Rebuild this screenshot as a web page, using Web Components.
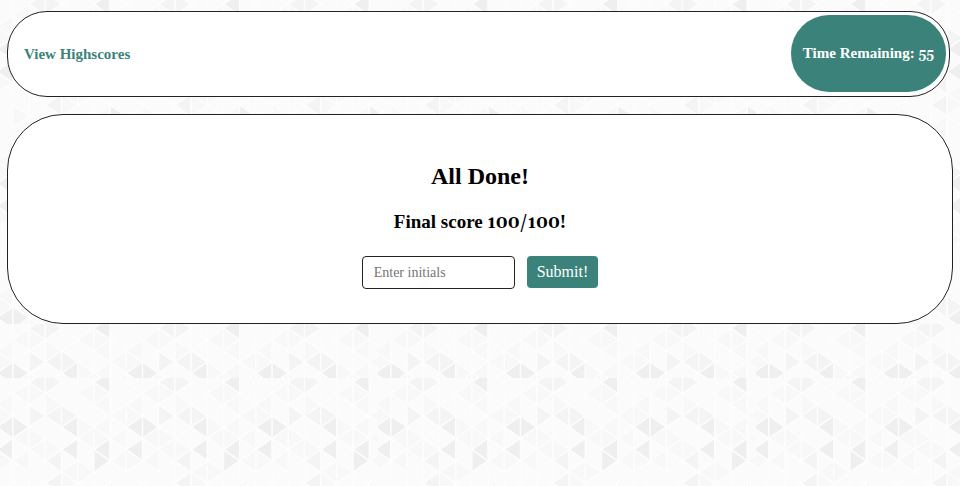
<!DOCTYPE html>
<html lang="en">
<head>
<meta charset="utf-8">
<title>Quiz</title>
<style>
  html { background: #fafafa; }
  body { margin: 0; font-family: "Liberation Serif", serif; color: #000; --accent: #3b837a; }
  .figures { font-family: Georgia, Gelasio, serif; font-size: 13px; line-height: 1; }
  h3 .figures { font-size: 17px; }
</style>
</head>
<body>
<quiz-page>
  <quiz-header>
    <a href="#highscores" slot="link">View Highscores</a>
    <quiz-timer>Time Remaining: <span class="figures">55</span></quiz-timer>
  </quiz-header>
  <quiz-card>
    <h2 slot="title">All Done!</h2>
    <h3 slot="score">Final score <span class="figures">100/100</span>!</h3>
    <initials-form></initials-form>
  </quiz-card>
</quiz-page>
<script>
const define = (name, html) => customElements.define(name, class extends HTMLElement {
  constructor() {
    super();
    this.attachShadow({ mode: "open" }).innerHTML = html;
  }
});

// Triangle mesh: each row is one 8-column group; digits are shades, 0 is the plain ground.
const rows = ["00220030", "01100110", "10010010", "10222001", "33003110", "01100111", "30113030", "11020031", "00001100", "00021000", "01000013", "00110000"];
const shades = ["#fbfbfb", "#f8f8f8", "#f4f4f4", "#efefef"];
const W = 16.2, H = 11.2, X0 = -3.3, Y0 = 4.4;

function meshGroup(top, bottom) {
  let shapes = "";
  const count = Math.ceil((bottom - top) / H) + 1;
  for (let k = -1; k < count; k++) {
    const row = k < 0 ? "00000000" : rows[k % 12];
    for (let c = 0; c < 24; c++) {
      const x = X0 + W * c, y = top + Y0 + H * k;
      const even = (c + k) % 2 === 0;
      const points = even ? `${x},${y} ${x + W},${y - H} ${x + W},${y + H}` : `${x + W},${y} ${x},${y - H} ${x},${y + H}`;
      shapes += `<polygon points="${points}" fill="${shades[row[c % 8]]}" stroke="#fdfdfd" stroke-width="1.4"/>`;
    }
  }
  return `<svg y="${top}" width="378" height="${bottom - top}" viewBox="0 ${top} 378 ${bottom - top}">${shapes}</svg>`;
}

define("mesh-backdrop", `
  <style>
    :host { position: fixed; inset: 0; z-index: -1; }
    svg { display: block; }
  </style>
  <svg width="100%" height="100%" aria-hidden="true">
    <defs><pattern id="mesh" width="378" height="378" patternUnits="userSpaceOnUse">${meshGroup(0, 324)}${meshGroup(324, 378)}</pattern></defs>
    <rect width="100%" height="100%" fill="url(#mesh)"/>
  </svg>`);

define("quiz-page", `
  <style>
    :host { display: flex; flex-direction: column; gap: 17px; padding: 11px 7px; }
  </style>
  <mesh-backdrop></mesh-backdrop>
  <slot></slot>`);

define("quiz-header", `
  <style>
    :host { display: block; margin-right: 3px; }
    header { display: flex; justify-content: space-between; align-items: center; padding: 3px 3px 4px 16px; background: #fff; border: 1px solid #222; border-radius: 40px; }
    ::slotted(a) { color: var(--accent); font-size: 15px; line-height: 20px; font-weight: bold; text-decoration: none; }
  </style>
  <header><slot name="link"></slot><slot></slot></header>`);

define("quiz-timer", `
  <style>
    :host { display: block; padding: 28px 12px 29px; border-radius: 38px; background: var(--accent); color: #fff; font-size: 15px; line-height: 20px; font-weight: bold; }
  </style>
  <slot></slot>`);

define("quiz-card", `
  <style>
    :host { display: block; }
    main { display: flex; flex-direction: column; align-items: center; padding: 46px 16px 34px; background: #fff; border: 1px solid #222; border-radius: 56px; }
    ::slotted(h2) { margin: 0; font-size: 24px; line-height: 30px; }
    ::slotted(h3) { margin: 19px 0 22px; font-size: 19px; line-height: 24px; }
  </style>
  <main><slot name="title"></slot><slot name="score"></slot><slot></slot></main>`);

define("initials-form", `
  <style>
    :host { display: block; }
    form { display: flex; align-items: flex-start; gap: 12px; }
    input, button { box-sizing: border-box; font-family: inherit; margin: 0; border-radius: 4px; }
    input { width: 153px; height: 33px; padding: 0 11px; border: 1px solid #222; background: #fff; color: #000; font-size: 14px; }
    input::placeholder { color: #757575; opacity: 1; }
    button { height: 32px; padding: 0 10px; border: 0; background: var(--accent); color: #fff; font-size: 16px; }
  </style>
  <form>
    <input type="text" placeholder="Enter initials" aria-label="Enter initials">
    <button type="button">Submit!</button>
  </form>`);
</script>
</body>
</html>
